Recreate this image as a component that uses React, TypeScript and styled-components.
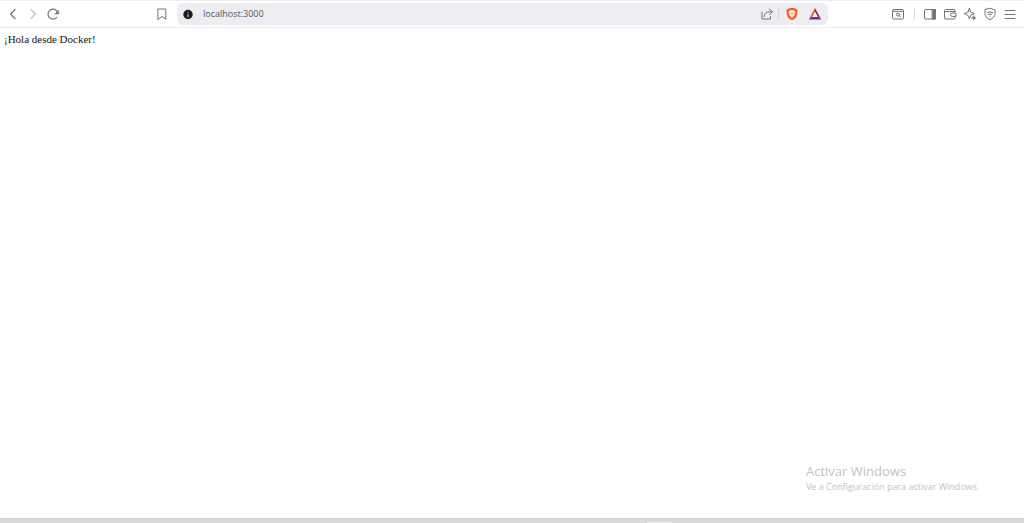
import React from 'react';
import styled, { createGlobalStyle } from 'styled-components';

const GlobalStyle = createGlobalStyle`
  * { box-sizing: border-box; }
  body { margin: 0; background: #fff; }
`;

const Browser = styled.div`
  display: flex;
  flex-direction: column;
  min-height: 100vh;
  background: #fff;
  font-family: "Open Sans", "Noto Sans", sans-serif;
`;

const Toolbar = styled.header`
  display: grid;
  grid-template-columns: 177px minmax(0, 1fr) 196px;
  align-items: center;
  height: 28px;
  border-top: 1px solid #ededef;
  border-bottom: 1px solid #ececee;
`;

const Group = styled.div<{ $end?: boolean }>`
  display: flex;
  align-items: center;
  justify-content: ${(p) => (p.$end ? 'flex-end' : 'flex-start')};
  padding: ${(p) => (p.$end ? '0 4px' : '0 5px 0 3px')};
`;

const IconButton = styled.button<{ $muted?: boolean; $wide?: boolean; $push?: boolean }>`
  display: flex;
  flex: none;
  align-items: center;
  justify-content: center;
  width: ${(p) => (p.$wide ? 23 : 20)}px;
  height: 20px;
  margin: 0;
  margin-left: ${(p) => (p.$push ? 'auto' : 0)};
  padding: 0;
  border: 0;
  background: none;
  color: ${(p) => (p.$muted ? '#c4c4c8' : '#707278')};
`;

const Separator = styled.span<{ $narrow?: boolean }>`
  display: flex;
  justify-content: center;
  width: ${(p) => (p.$narrow ? 3 : 12)}px;
  &::before {
    content: "";
    width: 1px;
    height: 10px;
    background: #d4d4d9;
  }
`;

const AddressBar = styled.form`
  display: flex;
  align-items: center;
  height: 22px;
  padding: 0 2px 0 1px;
  border-radius: 6px;
  background: #ededf1;
`;

const AddressInput = styled.input`
  flex: 1;
  min-width: 0;
  height: 20px;
  margin: 0;
  padding: 0 5px;
  border: 0;
  outline: 0;
  background: none;
  color: #50535c;
  font: 9px/20px "Open Sans", "Noto Sans", sans-serif;
`;

const Page = styled.main`
  display: flex;
  flex: 1;
  flex-direction: column;
  justify-content: space-between;
  padding: 4px 4px 24px;
`;

const Greeting = styled.p`
  margin: 0;
  color: #111;
  font: 11px/14px "Liberation Serif", serif;
`;

const Notice = styled.aside`
  align-self: flex-end;
  width: 214px;
  color: #bfbfbf;
`;

const NoticeTitle = styled.p`
  margin: 0;
  font-size: 13px;
  line-height: 18px;
`;

const NoticeText = styled.p`
  margin: 0;
  font-size: 9px;
  line-height: 14px;
  white-space: nowrap;
`;

const Taskbar = styled.footer`
  display: flex;
  align-items: flex-end;
  height: 5px;
  padding-left: 63%;
  border-top: 1px solid #cdcdcd;
  background: #d9d9d9;
`;

const TaskHighlight = styled.span`
  width: 25px;
  height: 1px;
  margin-left: 2px;
  background: #f2f2f2;
`;

const Icon = ({ children, size = 14 }: { children: React.ReactNode; size?: number }) => (
  <svg width={size} height={size} viewBox="0 0 14 14" fill="none" stroke="currentColor" strokeWidth="1" strokeLinecap="round" strokeLinejoin="round" aria-hidden="true">
    {children}
  </svg>
);

export default function App() {
  return (
    <Browser>
      <GlobalStyle />
      <Toolbar>
        <Group>
          <IconButton aria-label="Atrás">
            <Icon><path d="M9 2.5 4.5 7 9 11.5" strokeWidth="1.2" /></Icon>
          </IconButton>
          <IconButton aria-label="Adelante" $muted>
            <Icon><path d="M5 2.5 9.5 7 5 11.5" strokeWidth="1.2" /></Icon>
          </IconButton>
          <IconButton aria-label="Recargar">
            <Icon>
              <path d="M10.8 10.4A5 5 0 1 1 11.6 5.2" strokeWidth="1.2" />
              <path d="M12.6 3.4v3.6H9z" fill="currentColor" strokeWidth=".5" />
            </Icon>
          </IconButton>
          <IconButton aria-label="Guardar en marcadores" $push>
            <Icon><path d="M3.2 2h7.6v10.3L7 9.4l-3.8 2.9z" /></Icon>
          </IconButton>
        </Group>
        <AddressBar>
          <IconButton type="button" aria-label="Información del sitio">
            <Icon>
              <circle cx="7" cy="7.5" r="4.7" fill="#1d1d20" stroke="none" />
              <path d="M7 7.4v2.4M7 5.2v.1" stroke="#d5d5d9" />
            </Icon>
          </IconButton>
          <AddressInput aria-label="Dirección" defaultValue="localhost:3000" spellCheck={false} />
          <IconButton type="button" aria-label="Compartir">
            <Icon>
              <path d="M2 5v7h8.5V9.8M4.2 9.5C4.5 6.5 6.3 4.8 9 4.8h3M9.5 2 12.3 4.8 9.5 7.5" />
            </Icon>
          </IconButton>
          <Separator $narrow />
          <IconButton type="button" aria-label="Brave Shields" $wide>
            <Icon>
              <path d="M4.5 1h5l1.1 1.1 1.2-.1.9 1.8-.4 1.2.2 1-1.6 4.8L7 13.2l-3.9-2.4L1.5 6l.2-1-.4-1.2L2.2 2l1.2.1z" fill="#fb5a20" stroke="none" />
              <path d="M5 3.2 7 3.6l2-.4 1.7 2.1-1.5 2.2.2 1.1L7 11.3 4.6 8.6l.2-1.1-1.5-2.2z" fill="#fff" stroke="none" />
              <path d="m4.9 5.4 1.3.4-.3 1.4M9.1 5.4l-1.3.4.3 1.4M7 6.5v1.5M5.9 9.2 7 8.6l1.1.6" stroke="#fb5a20" strokeWidth=".5" />
            </Icon>
          </IconButton>
          <IconButton type="button" aria-label="Brave Rewards" $wide>
            <Icon>
              <path d="M7 1 .8 12.5l3.4-2.4L7 5z" fill="#ff4724" stroke="none" />
              <path d="M7 1l6.2 11.5-3.4-2.4L7 5z" fill="#9e1f63" stroke="none" />
              <path d="M.8 12.5h12.4l-3.4-2.7H4.2z" fill="#662d91" stroke="none" />
              <path d="M7 5 4.2 9.9h5.6z" fill="#fff" stroke="none" />
            </Icon>
          </IconButton>
        </AddressBar>
        <Group $end>
          <IconButton aria-label="Buscar en la página">
            <Icon>
              <rect x="1.5" y="2.5" width="11" height="9.5" rx="1.2" />
              <path d="M1.5 4.3h11" />
              <circle cx="7" cy="7.6" r="1.5" />
              <path d="m8.2 8.8 1.2 1.2" />
            </Icon>
          </IconButton>
          <Separator />
          <IconButton aria-label="Panel lateral">
            <Icon>
              <rect x="1.5" y="2.5" width="11" height="9.5" rx="1" />
              <path d="M9.5 2.5h3V12h-3z" fill="currentColor" />
            </Icon>
          </IconButton>
          <IconButton aria-label="Cartera">
            <Icon>
              <path d="M12 5V3.5a1 1 0 0 0-1-1H2.5a1 1 0 0 0-1 1V11a1 1 0 0 0 1 1H11a1 1 0 0 0 1-1V9.5M1.5 4.5H12" />
              <path d="M12.5 6H9.2a1.6 1.6 0 0 0 0 3.4h3.3z" />
            </Icon>
          </IconButton>
          <IconButton aria-label="Asistente Leo">
            <Icon>
              <path d="M6.3 1.7 7.8 5.2l3.5 1.5-3.5 1.6-1.5 3.5-1.5-3.5-3.5-1.6 3.5-1.5z" />
              <path d="M10.8 9.2v3.4M9.1 10.9h3.4" strokeWidth="1.3" />
            </Icon>
          </IconButton>
          <IconButton aria-label="VPN">
            <Icon>
              <path d="M7 1.3 12 3v3.7c0 2.7-2 4.6-5 6-3-1.4-5-3.3-5-6V3z" />
              <path d="M4.2 5.7q2.8-2 5.6 0M5.4 7.4q1.6-1.2 3.2 0M7 9.1v.1" />
            </Icon>
          </IconButton>
          <IconButton aria-label="Menú">
            <Icon><path d="M2 3.5h10M2 7.5h10M2 11.5h10" /></Icon>
          </IconButton>
        </Group>
      </Toolbar>
      <Page>
        <Greeting>¡Hola desde Docker!</Greeting>
        <Notice>
          <NoticeTitle>Activar Windows</NoticeTitle>
          <NoticeText>Ve a Configuración para activar Windows.</NoticeText>
        </Notice>
      </Page>
      <Taskbar><TaskHighlight /></Taskbar>
    </Browser>
  );
}
